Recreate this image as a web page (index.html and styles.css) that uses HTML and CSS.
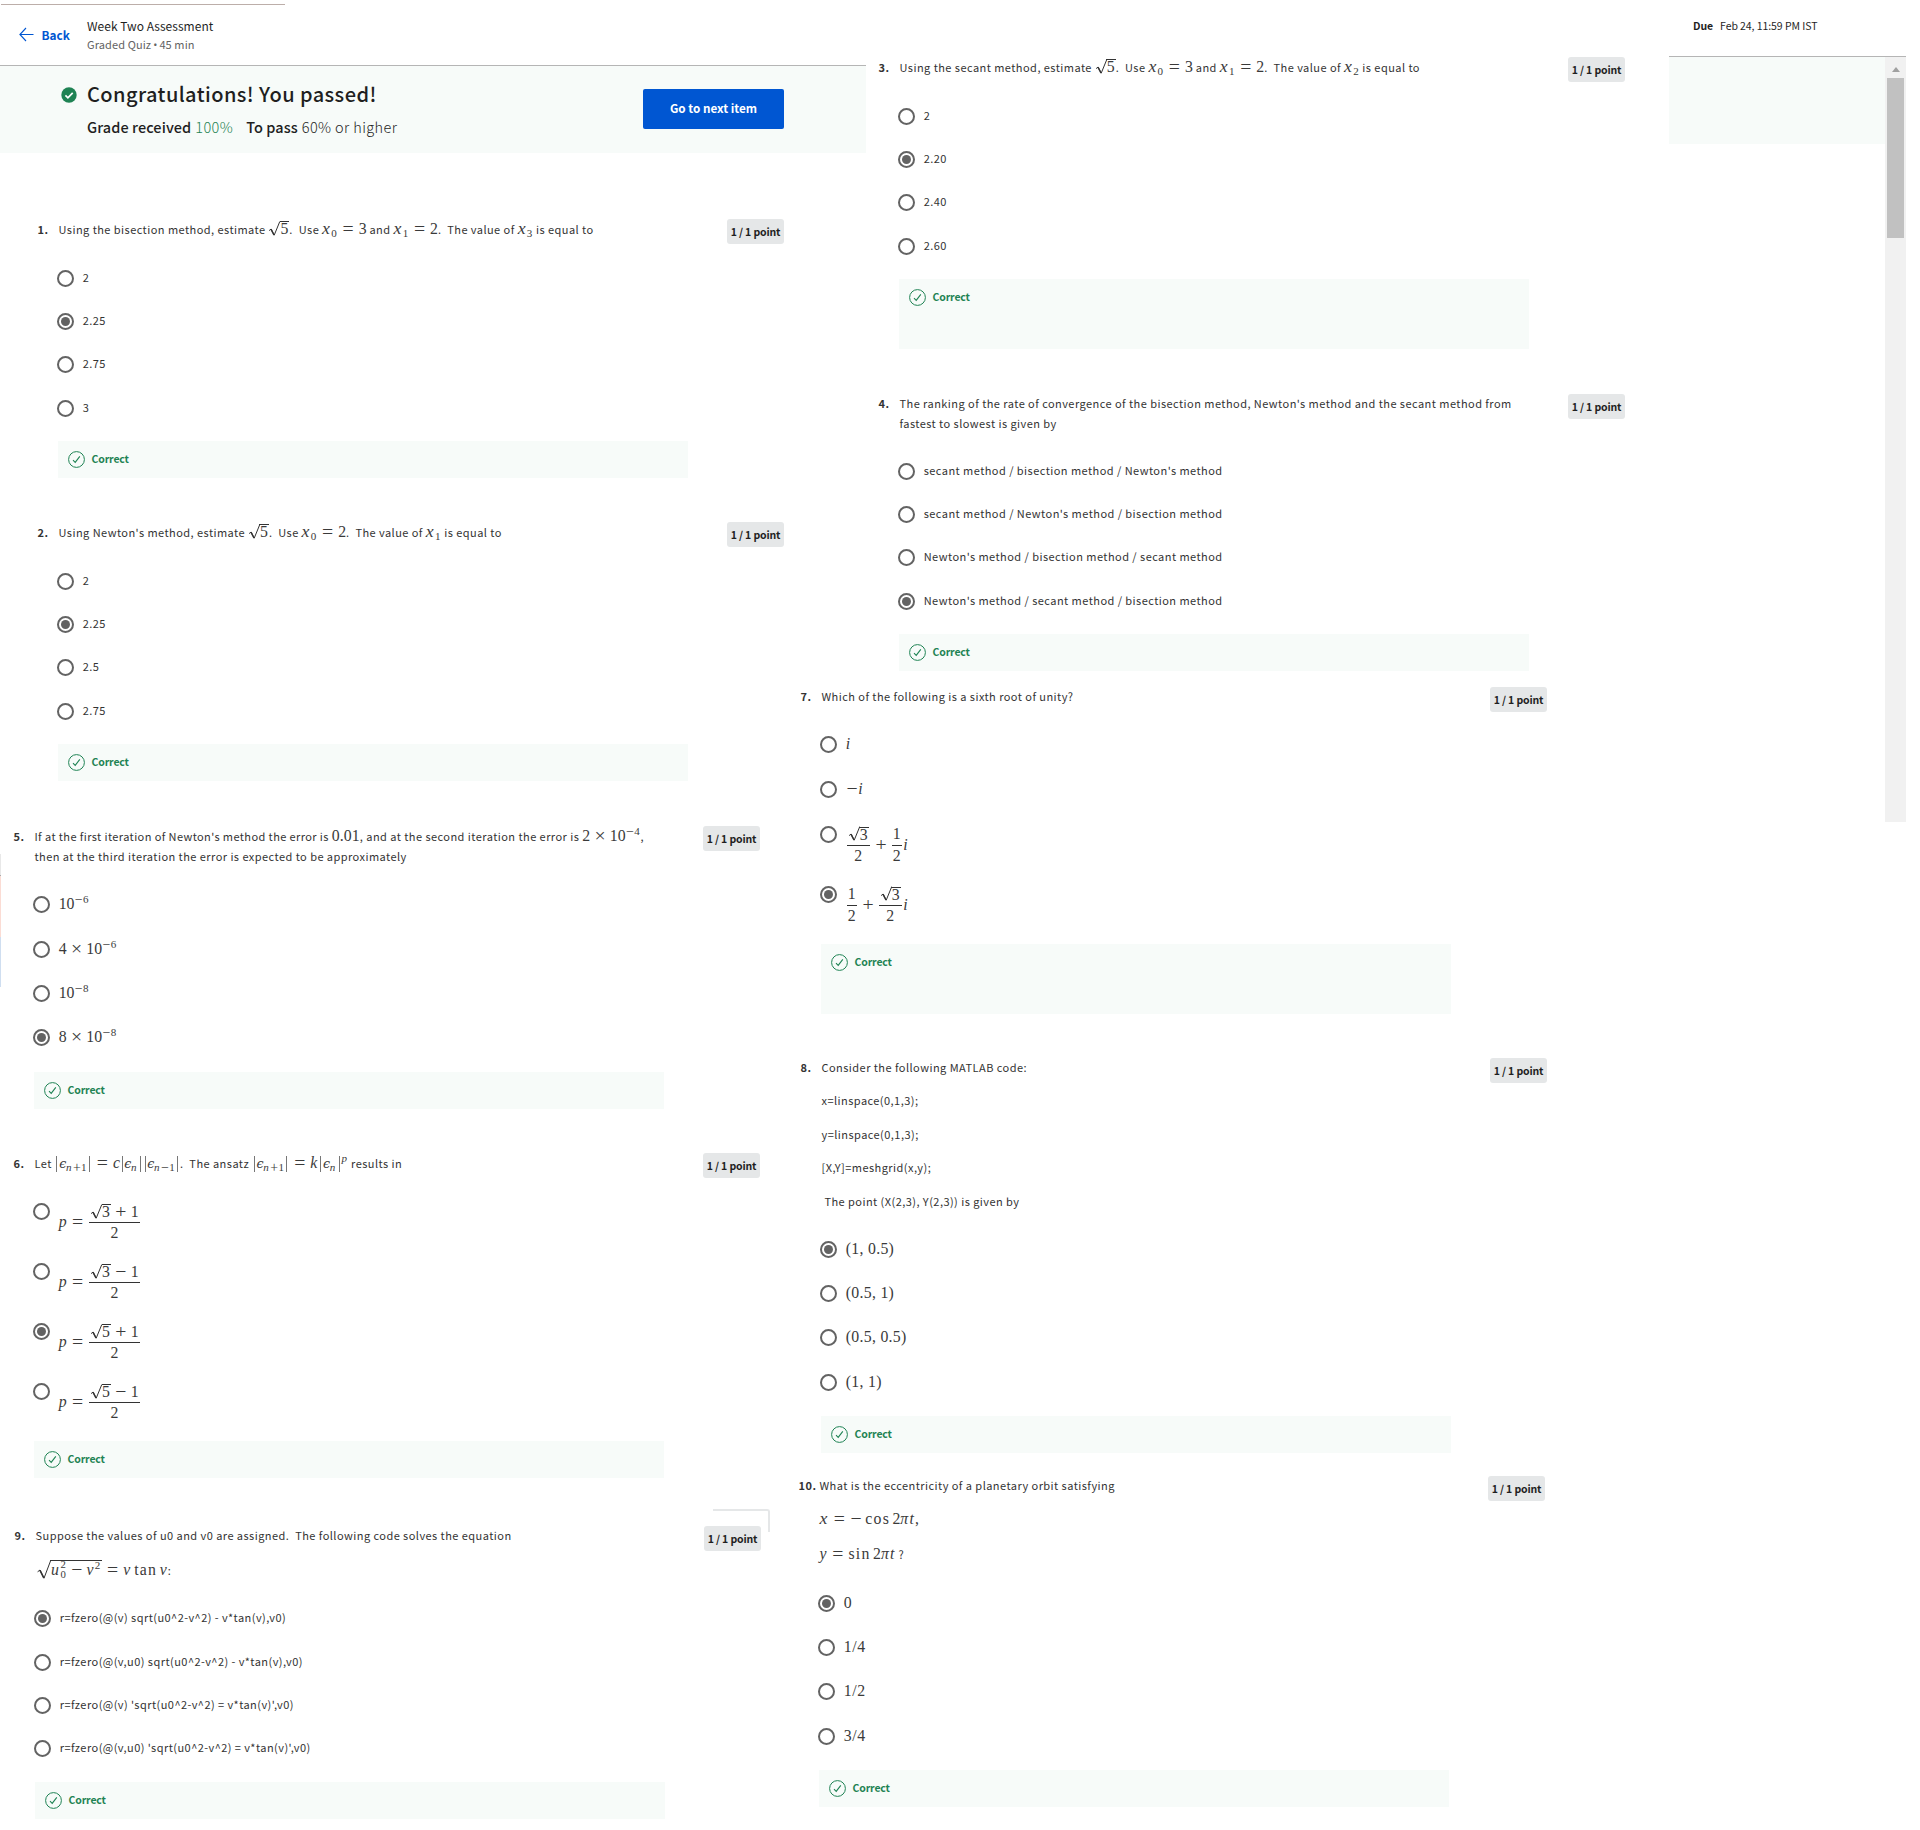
FILE: index.html
```html
<!DOCTYPE html>
<html lang="en">
<head>
<meta charset="utf-8">
<title>Week Two Assessment</title>
<link rel="stylesheet" href="styles.css">
</head>
<body>
<svg class="defs" aria-hidden="true">
  <symbol id="ok" viewBox="0 0 17 17"><circle cx="8.5" cy="8.5" r="7.9" fill="none" stroke="#1f8354"/><path d="M5 9.2l2.2 2.2 4.6-6" fill="none" stroke="#1f8354" stroke-width="1.1"/></symbol>
  <symbol id="root" viewBox="0 0 12 15"><path d="M1.1 9.6L3.1 8l3.1 6.2L11.8.5" fill="none" stroke="#333" stroke-width="1"/><path d="M3.1 8.4l2.9 5.6" fill="none" stroke="#333" stroke-width="1.5"/></symbol>
  <symbol id="bigroot" viewBox="0 0 15 19"><path d="M1.6 11.8L4 10l4 8.2L14.7.5" fill="none" stroke="#333" stroke-width="1"/><path d="M4 10.3l3.8 7.7" fill="none" stroke="#333" stroke-width="1.6"/></symbol>
</svg>
<div class="page">
  <div class="col-left">
    <header class="head">
      <div class="topline"></div>
      <div class="bar">
        <a class="back"><svg width="15" height="15" viewBox="0 0 15 15"><path d="M14.5 7.5H1M7 1L.9 7.5 7 14" fill="none" stroke="#0056d2" stroke-width="1.1"/></svg><span>Back</span></a>
        <div class="titles">
          <div class="title">Week Two Assessment</div>
          <div class="meta">Graded Quiz<span class="dot">•</span>45 min</div>
        </div>
      </div>
      <div class="banner">
        <svg class="pass" width="16" height="16" viewBox="0 0 16 16"><circle cx="8" cy="8" r="7.7" fill="#1f8354"/><path d="M4.4 8.4l2.5 2.4 4.8-5" fill="none" stroke="#fff" stroke-width="1.7"/></svg>
        <div class="result">
          <div class="congrats">Congratulations! You passed!</div>
          <div class="grade"><b>Grade received</b><span class="pct">100%</span><b class="topass">To pass</b><span class="need">60% or higher</span></div>
        </div>
        <button class="next">Go to next item</button>
      </div>
    </header>

    <section class="question q1">
      <div class="num">1.</div>
      <div class="body">
        <div class="prompt"><p>Using the bisection method, estimate <span class="m"><span class="sqrt"><svg><use href="#root"/></svg><span class="rad">5</span></span></span>.&nbsp; Use <span class="m"><i class="gx">x</i><sub>0</sub><span class="rel">=</span>3</span> and <span class="m"><i class="gx">x</i><sub>1</sub><span class="rel">=</span>2</span>.&nbsp; The value of <span class="m"><i class="gx">x</i><sub>3</sub></span> is equal to</p></div>
        <div class="option"><span class="radio"></span><span class="label">2</span></div>
        <div class="option"><span class="radio on"></span><span class="label">2.25</span></div>
        <div class="option"><span class="radio"></span><span class="label">2.75</span></div>
        <div class="option"><span class="radio"></span><span class="label">3</span></div>
        <div class="feedback"><svg><use href="#ok"/></svg><span>Correct</span></div>
      </div>
      <div class="points">1 / 1 point</div>
    </section>

    <section class="question q2">
      <div class="num">2.</div>
      <div class="body">
        <div class="prompt"><p>Using Newton's method, estimate <span class="m"><span class="sqrt"><svg><use href="#root"/></svg><span class="rad">5</span></span></span>.&nbsp; Use <span class="m"><i class="gx">x</i><sub>0</sub><span class="rel">=</span>2</span>.&nbsp; The value of <span class="m"><i class="gx">x</i><sub>1</sub></span> is equal to</p></div>
        <div class="option"><span class="radio"></span><span class="label">2</span></div>
        <div class="option"><span class="radio on"></span><span class="label">2.25</span></div>
        <div class="option"><span class="radio"></span><span class="label">2.5</span></div>
        <div class="option"><span class="radio"></span><span class="label">2.75</span></div>
        <div class="feedback"><svg><use href="#ok"/></svg><span>Correct</span></div>
      </div>
      <div class="points">1 / 1 point</div>
    </section>

    <section class="question q5">
      <div class="num">5.</div>
      <div class="body">
        <div class="prompt"><p><span class="snug">If at the first iteration of Newton's method the error is</span> <span class="m dec">0.01</span>, and at the second iteration the error is <span class="m">2<span class="bin">×</span>10<sup><span class="sop">−</span>4</sup></span>,<br>then at the third iteration the error is expected to be approximately</p></div>
        <div class="option"><span class="radio"></span><span class="m label">10<sup><span class="sop">−</span>6</sup></span></div>
        <div class="option"><span class="radio"></span><span class="m label">4<span class="bin">×</span>10<sup><span class="sop">−</span>6</sup></span></div>
        <div class="option"><span class="radio"></span><span class="m label">10<sup><span class="sop">−</span>8</sup></span></div>
        <div class="option"><span class="radio on"></span><span class="m label">8<span class="bin">×</span>10<sup><span class="sop">−</span>8</sup></span></div>
        <div class="feedback"><svg><use href="#ok"/></svg><span>Correct</span></div>
      </div>
      <div class="points">1 / 1 point</div>
    </section>

    <section class="question q6">
      <div class="num">6.</div>
      <div class="body">
        <div class="prompt"><p>Let <span class="m"><span class="abs"></span><i class="ge">ϵ</i><sub><i class="gn">n</i><span class="sop">+</span>1</sub><span class="abs"></span><span class="rel">=</span><i class="gc">c</i><span class="abs"></span><i class="ge">ϵ</i><sub><i class="gn">n</i></sub><span class="abs"></span><span class="abs"></span><i class="ge">ϵ</i><sub><i class="gn">n</i><span class="sop">−</span>1</sub><span class="abs"></span></span>.&nbsp; The ansatz <span class="m"><span class="abs"></span><i class="ge">ϵ</i><sub><i class="gn">n</i><span class="sop">+</span>1</sub><span class="abs"></span><span class="rel">=</span><i class="gk">k</i><span class="abs"></span><i class="ge">ϵ</i><sub><i class="gn">n</i></sub><span class="abs"></span><sup><i class="gp">p</i></sup></span> results in</p></div>
        <div class="option"><span class="radio"></span><span class="m label eq"><i class="gp">p</i><span class="rel">=</span><span class="frac"><span class="top"><span class="sqrt"><svg><use href="#root"/></svg><span class="rad">3</span></span><span class="bin">+</span>1</span><span class="bot">2</span></span></span></div>
        <div class="option"><span class="radio"></span><span class="m label eq"><i class="gp">p</i><span class="rel">=</span><span class="frac"><span class="top"><span class="sqrt"><svg><use href="#root"/></svg><span class="rad">3</span></span><span class="bin">−</span>1</span><span class="bot">2</span></span></span></div>
        <div class="option"><span class="radio on"></span><span class="m label eq"><i class="gp">p</i><span class="rel">=</span><span class="frac"><span class="top"><span class="sqrt"><svg><use href="#root"/></svg><span class="rad">5</span></span><span class="bin">+</span>1</span><span class="bot">2</span></span></span></div>
        <div class="option"><span class="radio"></span><span class="m label eq"><i class="gp">p</i><span class="rel">=</span><span class="frac"><span class="top"><span class="sqrt"><svg><use href="#root"/></svg><span class="rad">5</span></span><span class="bin">−</span>1</span><span class="bot">2</span></span></span></div>
        <div class="feedback"><svg><use href="#ok"/></svg><span>Correct</span></div>
      </div>
      <div class="points">1 / 1 point</div>
    </section>

    <section class="question q9">
      <div class="num">9.</div>
      <div class="body">
        <div class="prompt"><p>Suppose the values of u0 and v0 are assigned.&nbsp; The following code solves the equation</p>
          <p class="line"><span class="m"><span class="sqrt big"><svg><use href="#bigroot"/></svg><span class="rad"><i class="gu">u</i><span class="supsub"><span>2</span><span>0</span></span><span class="bin">−</span><i class="gv">v</i><sup>2</sup></span></span><span class="rel">=</span><i class="gv">v</i><span class="fn">tan</span><i class="gv">v</i></span>:</p></div>
        <div class="option"><span class="radio on"></span><span class="label">r=fzero(@(v) sqrt(u0^2-v^2) - v*tan(v),v0)</span></div>
        <div class="option"><span class="radio"></span><span class="label">r=fzero(@(v,u0) sqrt(u0^2-v^2) - v*tan(v),v0)</span></div>
        <div class="option"><span class="radio"></span><span class="label">r=fzero(@(v) 'sqrt(u0^2-v^2) = v*tan(v)',v0)</span></div>
        <div class="option"><span class="radio"></span><span class="label">r=fzero(@(v,u0) 'sqrt(u0^2-v^2) = v*tan(v)',v0)</span></div>
        <div class="feedback"><svg><use href="#ok"/></svg><span>Correct</span></div>
      </div>
      <div class="points">1 / 1 point</div>
      <div class="ghost"></div>
    </section>
    <div class="edge"></div>
  </div>

  <main class="col-main">
    <section class="question q3">
      <div class="num">3.</div>
      <div class="body">
        <div class="prompt"><p>Using the secant method, estimate <span class="m"><span class="sqrt"><svg><use href="#root"/></svg><span class="rad">5</span></span></span>.&nbsp; Use <span class="m"><i class="gx">x</i><sub>0</sub><span class="rel">=</span>3</span> and <span class="m"><i class="gx">x</i><sub>1</sub><span class="rel">=</span>2</span>.&nbsp; The value of <span class="m"><i class="gx">x</i><sub>2</sub></span> is equal to</p></div>
        <div class="option"><span class="radio"></span><span class="label">2</span></div>
        <div class="option"><span class="radio on"></span><span class="label">2.20</span></div>
        <div class="option"><span class="radio"></span><span class="label">2.40</span></div>
        <div class="option"><span class="radio"></span><span class="label">2.60</span></div>
        <div class="feedback tall"><svg><use href="#ok"/></svg><span>Correct</span></div>
      </div>
      <div class="points">1 / 1 point</div>
    </section>

    <section class="question q4 raised">
      <div class="num">4.</div>
      <div class="body">
        <div class="prompt"><p>The ranking of the rate of convergence of the bisection method, Newton's method and the secant method from<br>fastest to slowest is given by</p></div>
        <div class="option"><span class="radio"></span><span class="label">secant method / bisection method / Newton's method</span></div>
        <div class="option"><span class="radio"></span><span class="label">secant method / Newton's method / bisection method</span></div>
        <div class="option"><span class="radio"></span><span class="label">Newton's method / bisection method / secant method</span></div>
        <div class="option"><span class="radio on"></span><span class="label">Newton's method / secant method / bisection method</span></div>
        <div class="feedback"><svg><use href="#ok"/></svg><span>Correct</span></div>
      </div>
      <div class="points">1 / 1 point</div>
    </section>

    <section class="question q7 raised">
      <div class="num">7.</div>
      <div class="body">
        <div class="prompt"><p>Which of the following is a sixth root of unity?</p></div>
        <div class="option"><span class="radio"></span><span class="m label"><i>i</i></span></div>
        <div class="option"><span class="radio"></span><span class="m label"><span class="neg">−</span><i>i</i></span></div>
        <div class="option"><span class="radio"></span><span class="m label eq"><span class="frac"><span class="top"><span class="sqrt"><svg><use href="#root"/></svg><span class="rad">3</span></span></span><span class="bot">2</span></span><span class="bin">+</span><span class="frac"><span class="top">1</span><span class="bot">2</span></span><i>i</i></span></div>
        <div class="option"><span class="radio on"></span><span class="m label eq"><span class="frac"><span class="top">1</span><span class="bot">2</span></span><span class="bin">+</span><span class="frac"><span class="top"><span class="sqrt"><svg><use href="#root"/></svg><span class="rad">3</span></span></span><span class="bot">2</span></span><i>i</i></span></div>
        <div class="feedback tall"><svg><use href="#ok"/></svg><span>Correct</span></div>
      </div>
      <div class="points">1 / 1 point</div>
    </section>

    <section class="question q8 raised">
      <div class="num">8.</div>
      <div class="body">
        <div class="prompt"><p>Consider the following MATLAB code:</p><p>x=linspace(0,1,3);</p><p>y=linspace(0,1,3);</p><p>[X,Y]=meshgrid(x,y);</p><p>&nbsp;The point (X(2,3), Y(2,3)) is given by</p></div>
        <div class="option"><span class="radio on"></span><span class="m label pair">(1, 0.5)</span></div>
        <div class="option"><span class="radio"></span><span class="m label pair">(0.5, 1)</span></div>
        <div class="option"><span class="radio"></span><span class="m label pair">(0.5, 0.5)</span></div>
        <div class="option"><span class="radio"></span><span class="m label pair">(1, 1)</span></div>
        <div class="feedback"><svg><use href="#ok"/></svg><span>Correct</span></div>
      </div>
      <div class="points">1 / 1 point</div>
    </section>

    <section class="question q10 raised">
      <div class="num">10.</div>
      <div class="body">
        <div class="prompt"><p>What is the eccentricity of a planetary orbit satisfying</p>
          <p><span class="m"><i class="gx">x</i><span class="rel">=</span><span class="neg">−</span><span class="fn">cos</span>2<i class="gpi">π</i><i class="gt">t</i>,</span></p>
          <p class="line"><span class="m"><i class="gy">y</i><span class="rel">=</span><span class="fn first">sin</span>2<i class="gpi">π</i><i class="gt">t</i></span> ?</p></div>
        <div class="option"><span class="radio on"></span><span class="m label">0</span></div>
        <div class="option"><span class="radio"></span><span class="m label quot">1/4</span></div>
        <div class="option"><span class="radio"></span><span class="m label quot">1/2</span></div>
        <div class="option"><span class="radio"></span><span class="m label quot">3/4</span></div>
        <div class="feedback"><svg><use href="#ok"/></svg><span>Correct</span></div>
      </div>
      <div class="points">1 / 1 point</div>
    </section>
  </main>

  <aside class="col-side">
    <div class="due"><b>Due</b><span>Feb 24, 11:59 PM IST</span></div>
    <div class="pane">
      <div class="tint"></div>
      <div class="scroll"><span class="up"></span><span class="thumb"></span></div>
    </div>
  </aside>
</div>
</body>
</html>
```
FILE: styles.css
```css
* { box-sizing: border-box; }
body {
  margin: 0;
  background: #fff;
  color: #333;
  font: 400 11px/20px "Noto Sans CJK SC", "Noto Sans", sans-serif;
  letter-spacing: .45px;
}
p { margin: 0; }
.defs { display: none; }
.page { display: flex; width: 1920px; height: 1830px; overflow: hidden; }
.col-left { position: relative; width: 798px; height: 1830px; display: grid; grid-template-rows: 219px 303px 304px 327px 373px 304px; }
.col-main { width: 871px; height: 1830px; padding-top: 57px; display: grid; grid-template-rows: 337px 293px 371px 418px 354px; }
.col-side { width: 237px; height: 822px; display: flex; flex-direction: column; }

/* header */
.head { width: 866px; }
.topline { width: 284px; height: 5px; border-bottom: 1px solid #bcaea9; margin-left: 1px; }
.bar { height: 61px; border-bottom: 1px solid #b5b5b5; display: flex; }
.back { display: flex; gap: 7.5px; padding: 22px 0 0 19px; width: 87px; color: #0056d2; font-weight: 700; font-size: 11.8px; letter-spacing: 0; line-height: 15px; }
.titles { padding-top: 12px; }
.title { font-size: 12px; line-height: 18px; letter-spacing: .03px; color: #1f1f1f; }
.meta { font-size: 11px; line-height: 18px; color: #636363; letter-spacing: .1px; }
.dot { font-family: "Open Sans", sans-serif; margin: 0 2px; }
.banner { height: 87px; background: #f7fbf9; display: flex; color: #1f1f1f; }
.pass { margin: 21px 10px 0 61px; flex: none; }
.result { width: 556px; padding-top: 14px; }
.congrats { font-size: 20px; font-weight: 500; line-height: 28px; letter-spacing: .42px; }
.grade { font-size: 14.5px; line-height: 24px; margin-top: 7px; letter-spacing: .07px; display: flex; }
.grade b { font-weight: 500; }
.grade span { font-weight: 300; letter-spacing: .4px; }
.pct { color: #1f8354; margin: 0 13px 0 4px; }
.topass { margin-right: 4px; }
.next { width: 141px; height: 40px; margin-top: 23px; border: 0; border-radius: 2px; padding: 0 0 2px; background: #0056d2; color: #fff; font: 700 11.7px/36px "Noto Sans CJK SC", sans-serif; letter-spacing: 0; }

/* questions */
.question { display: grid; grid-template-columns: 21px 630px 39px 57px; }
.num { font-weight: 700; padding-left: .5px; }
.points { grid-column: 4; height: 25px; border-radius: 3px; background: #e5e7e8; color: #1f1f1f; font-weight: 700; font-size: 10.5px; line-height: 25px; letter-spacing: -.15px; text-align: center; white-space: nowrap; }
.body { display: grid; grid-template-rows: var(--rows); align-content: start; }
.prompt, .label { white-space: nowrap; }
.prompt { padding-left: .5px; }
.snug { letter-spacing: .4px; }
.raised .num, .raised .prompt, .q9 .num, .q9 .prompt { margin-top: -1px; }
.option { display: flex; margin-left: -1px; gap: 8.7px; align-items: flex-start; line-height: 17px; }
.radio { flex: none; width: 17px; height: 17px; border: 2px solid #636363; border-radius: 50%; padding: 2px; }
.radio.on { background: #636363; background-clip: content-box; }
.label { margin-top: -1px; }
.feedback { height: 37px; background: #f7fbf9; display: flex; padding: 10px; gap: 6.5px; color: #1f8354; font-weight: 700; font-size: 10.5px; line-height: 15px; letter-spacing: -.15px; }
.feedback.tall { height: 70px; }
.feedback svg { width: 17px; height: 17px; flex: none; }
.q1, .q2 { padding-left: 37px; --rows: 51px 43px 43px 44px 41px auto; }
.q5 { padding-left: 13px; --rows: 70px 45px 44px 44px 43px auto; }
.q6 { padding-left: 13px; --rows: 50px 60px 60px 60px 58px auto; }
.q9 { padding-left: 14px; --rows: 84px 44px 43px 43px 42px auto; position: relative; }
.q3 { padding-left: 80px; --rows: 51px 43px 43px 44px 41px auto; }
.q4 { padding-left: 80px; --rows: 69px 43px 43px 44px 41px auto; }
.q7 { padding-left: 2px; --rows: 49px 45px 45px 60px 58px auto; }
.q8 { padding-left: 2px; --rows: 183px 44px 44px 45px 42px auto; }
.q10 { --rows: 119px 44px 44px 45px 42px auto; }
.q8 p + p { margin-top: 13.4px; }
.q10 p + p { margin-top: 14px; }
.q10 p + .line { margin-top: 15px; }
.q9 .line { margin-top: 15px; }

/* formulas */
.m { font-family: "Liberation Serif", serif; font-size: 15.8px; line-height: 0; letter-spacing: 0; color: #3a3a3a; }
.m i { display: inline-block; font-style: italic; }
.m.label { line-height: 17px; margin-top: -1px; }
.m sub, .m sup { font-size: .7em; line-height: 0; margin-right: .07em; }
.m sub { vertical-align: -.28em; }
.m sup { vertical-align: .55em; }
.m i.gx { width: .52em; font-size: 1.12em; }
.m i.ge { width: .53em; font-family: "DejaVu Serif", serif; font-size: .8em; }
.m i.gn { width: .6em; }
.m i.gc { width: .433em; }
.m i.gk { width: .52em; }
.m i.gp { width: .53em; }
.m i.gu { width: .6em; }
.m i.gv { width: .52em; }
.m i.gy { width: .5em; }
.m i.gt { width: .35em; }
.m i.gpi { width: .58em; }
.rel, .bin, .neg, .sop { display: inline-block; text-align: center; font-size: 1.25em; vertical-align: -.05em; }
.rel { width: 1.066em; }
.bin { width: 1em; }
.neg { width: .64em; }
.sop { width: .62em; }
.dec { letter-spacing: .1px; }
.fn { letter-spacing: .08em; margin: 0 .15em 0 .18em; }
.fn.first { margin-left: 0; }
.abs { display: inline-block; height: 16px; width: 4.5px; vertical-align: -4px; background: linear-gradient(#777, #777) center / 1px 100% no-repeat; }
.sqrt { white-space: nowrap; display: inline-block; line-height: 14px; }
.sqrt svg { width: 12px; height: 15px; vertical-align: -1.5px; }
.sqrt .rad { display: inline-block; border-top: 1px solid #333; line-height: 14px; height: 15px; padding: 0 1px 0 .5px; margin-left: -.5px; }
.sqrt.big svg { width: 15px; height: 19px; vertical-align: -4px; }
.sqrt.big .rad { line-height: 16px; padding-left: 1px; }
.supsub { display: inline-flex; flex-direction: column; font-size: .68em; line-height: 9.5px; vertical-align: 7px; height: 19px; margin: -8px 1px -8px 0; }
.eq { display: flex; align-items: center; }
.m.label.eq { margin-top: 0; }
.eq > i, .eq > .rel, .eq > .bin { margin-top: -3px; }
.frac { display: flex; flex-direction: column; text-align: center; margin: 0 1.5px 0 1px; }
.top { height: 19px; line-height: 16px; padding: 0 1px; }
.bot { height: 20px; line-height: 19px; border-top: 1px solid #333; }
.pair { letter-spacing: .3px; }
.quot { letter-spacing: .6px; }

/* stray outline above the last badge */
.ghost { position: absolute; left: 713px; top: -17px; width: 57px; height: 23px; border-top: 2px solid #e5e7e8; border-right: 2px solid #e5e7e8; border-top-right-radius: 3px; }
.edge { position: absolute; left: 0; top: 854px; width: 1px; height: 133px; background: linear-gradient(#e8e8e8 0 21px, #aaa 21px 22px, #fbdcd4 22px 83px, #cfdef0 83px); }

/* right pane */
.due { height: 57px; border-bottom: 1px solid #b5b5b5; padding: 16px 0 0 24px; display: flex; gap: 7px; font-size: 10.5px; letter-spacing: -.07px; color: #1f1f1f; }
.due b { font-weight: 700; }
.pane { display: flex; flex: 1; }
.tint { width: 216px; height: 87px; background: #f7fbf9; }
.scroll { width: 21px; background: #f1f1f1; display: flex; flex-direction: column; align-items: center; padding-top: 10px; }
.up { border: 4.5px solid transparent; border-top: 0; border-bottom: 5px solid #a0a0a0; }
.thumb { width: 17px; height: 160px; margin-top: 6px; background: #c1c1c1; }
```
